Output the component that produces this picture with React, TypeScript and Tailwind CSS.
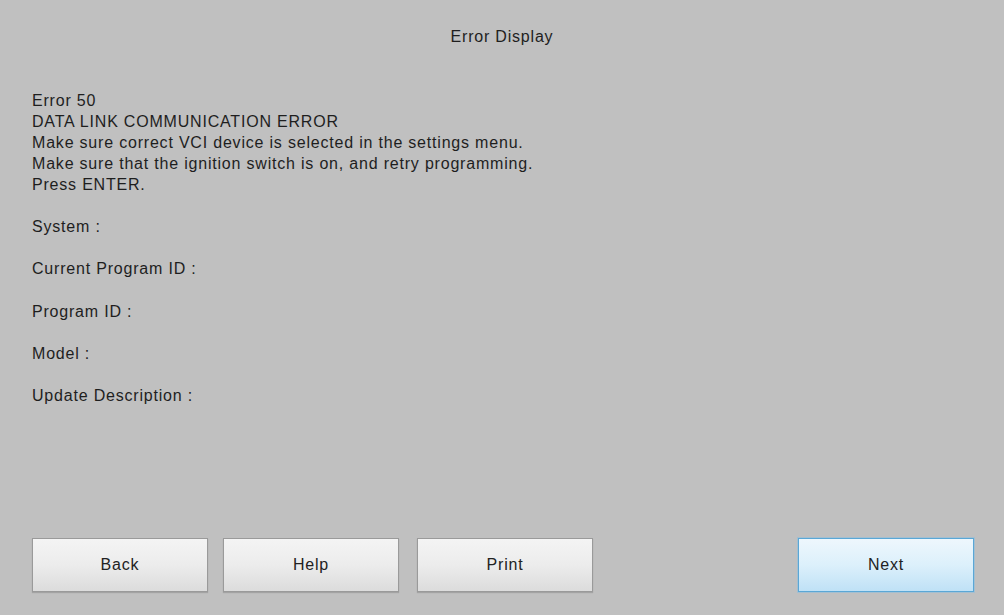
export default function App() {
  const fields = ["System :", "Current Program ID :", "Program ID :", "Model :", "Update Description :"];
  const btn =
    "flex h-[54px] w-[176px] items-center justify-center border border-[#9a9a9a] bg-gradient-to-b from-[#f4f4f4] via-[#ececec] to-[#dcdcdc] text-[16px] tracking-[0.8px] text-[#222] shadow-[0_1px_1px_rgba(0,0,0,0.15)]";
  return (
    <div
      className="flex h-[615px] w-[1004px] flex-col bg-[#c0c0c0] text-[#1e1e1e] tracking-[0.8px]"
      style={{ fontFamily: '"Liberation Sans", Arial, sans-serif' }}
    >
      <div className="pt-[25px] text-center text-[16px]">Error Display</div>

      <div className="pl-[32px] pt-[41px] text-[16px] leading-[21px]">
        <p>Error 50</p>
        <p>DATA LINK COMMUNICATION ERROR</p>
        <p>Make sure correct VCI device is selected in the settings menu.</p>
        <p>Make sure that the ignition switch is on, and retry programming.</p>
        <p>Press ENTER.</p>
      </div>

      <div className="flex flex-col gap-[21.3px] pl-[32px] pt-[21px] text-[16px] leading-[21px]">
        {fields.map((f) => (
          <p key={f}>{f}</p>
        ))}
      </div>

      <div className="mt-auto flex items-center pl-[32px] pr-[30px] pb-[23px]">
        <button className={`${btn} w-[175px]`}>Back</button>
        <button className={`${btn} ml-[15px]`}>Help</button>
        <button className={`${btn} ml-[18px]`}>Print</button>
        <button className="ml-auto flex h-[54px] w-[176px] items-center justify-center border border-[#5aa7d6] bg-gradient-to-b from-[#eef7fd] via-[#dcf0fb] to-[#bfe1f6] text-[16px] tracking-[0.8px] text-[#222] shadow-[0_0_0_1px_rgba(120,190,235,0.4)]">
          Next
        </button>
      </div>
    </div>
  );
}
